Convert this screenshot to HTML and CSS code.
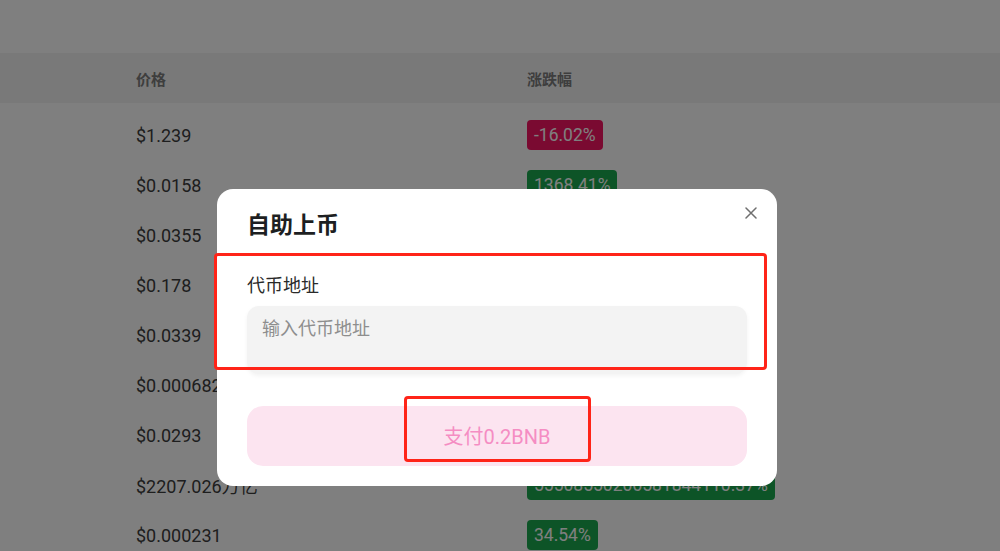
FILE: index.html
```html
<!DOCTYPE html>
<html lang="zh-CN">
<head>
<meta charset="utf-8">
<title>自助上币</title>
<link rel="stylesheet" href="styles.css">
</head>
<body>
<div class="page">
  <div class="top"></div>
  <div class="table">
    <div class="row head">
      <div class="cell price">价格</div>
      <div class="cell change">涨跌幅</div>
    </div>
    <div class="body">
      <div class="row"><div class="cell price">$1.239</div><div class="cell change"><span class="badge down">-16.02%</span></div></div>
      <div class="row"><div class="cell price">$0.0158</div><div class="cell change"><span class="badge up">1368.41%</span></div></div>
      <div class="row"><div class="cell price">$0.0355</div><div class="cell change"><span class="badge up">12.85%</span></div></div>
      <div class="row"><div class="cell price">$0.178</div><div class="cell change"><span class="badge up">8.31%</span></div></div>
      <div class="row"><div class="cell price">$0.0339</div><div class="cell change"><span class="badge up">25.07%</span></div></div>
      <div class="row"><div class="cell price">$0.000682</div><div class="cell change"><span class="badge up">41.66%</span></div></div>
      <div class="row"><div class="cell price">$0.0293</div><div class="cell change"><span class="badge up">19.72%</span></div></div>
      <div class="row"><div class="cell price">$2207.026万亿</div><div class="cell change"><span class="badge up">55508550206581844110.37%</span></div></div>
      <div class="row"><div class="cell price">$0.000231</div><div class="cell change"><span class="badge up">34.54%</span></div></div>
    </div>
  </div>
</div>

<div class="overlay">
  <div class="dialog">
    <button class="close" aria-label="关闭">
      <svg width="12" height="12" viewBox="0 0 12 12"><path d="M1 1L11 11M11 1L1 11" stroke="#6f6f6f" stroke-width="1.5" fill="none" stroke-linecap="round"/></svg>
    </button>
    <h2 class="title">自助上币</h2>
    <label class="label">代币地址</label>
    <div class="input">输入代币地址</div>
    <button class="pay">支付0.2BNB</button>
  </div>
  <div class="mark mark-field"></div>
  <div class="mark mark-pay"></div>
</div>
</body>
</html>
```

FILE: styles.css
```css
html, body {
  margin: 0;
  padding: 0;
  background: #ffffff;
  font-family: Roboto, "Noto Sans CJK SC", sans-serif;
  overflow: hidden;
}
.page {
  width: 1000px;
  height: 551px;
  overflow: hidden;
}
.top {
  height: 53px;
}
.row {
  display: grid;
  grid-template-columns: 391px 1fr;
  padding-left: 136px;
  height: 50px;
  align-items: center;
}
.row.head {
  background: #f3f3f3;
  font-size: 15px;
  font-weight: 700;
  color: #7c7c7c;
}
.body {
  padding-top: 7px;
}
.body .row {
  font-size: 18px;
  color: #3c3c3c;
}
.badge {
  display: inline-block;
  height: 30px;
  line-height: 30px;
  padding: 0 7px;
  border-radius: 4px;
  color: #ffffff;
  font-size: 17.5px;
}
.badge.down { background: #f51462; }
.badge.up { background: #1aa84e; }

.overlay {
  position: fixed;
  inset: 0;
  background: rgba(0, 0, 0, 0.5);
  padding: 189px 0 0 217px;
}
.dialog {
  position: relative;
  box-sizing: border-box;
  width: 560px;
  height: 297px;
  background: #ffffff;
  border-radius: 16px;
  padding: 22px 30px 20px;
  display: flex;
  flex-direction: column;
}
.close {
  position: absolute;
  right: 18px;
  top: 16px;
  width: 16px;
  height: 16px;
  padding: 2px;
  border: 0;
  background: none;
  display: flex;
}
.title {
  margin: 0;
  font-size: 23px;
  line-height: 30px;
  font-weight: 700;
  color: #1d1f22;
}
.label {
  margin-top: 32px;
  font-size: 18px;
  line-height: 26px;
  color: #2a2a2a;
}
.input {
  margin-top: 7px;
  height: 68px;
  box-sizing: border-box;
  padding: 10px 15px;
  background: #f3f3f3;
  border-radius: 12px;
  box-shadow: 0 2px 4px rgba(0, 0, 0, 0.05);
  font-size: 18px;
  line-height: 26px;
  color: #8e8e8e;
}
.pay {
  margin-top: 32px;
  height: 60px;
  border: 0;
  border-radius: 16px;
  background: #fce4f0;
  color: #f58dc3;
  font-family: Roboto, "Noto Sans CJK SC", sans-serif;
  font-size: 20px;
  padding-bottom: 2px;
}
.mark {
  position: absolute;
  box-sizing: border-box;
  border: 3px solid #ff2418;
  border-radius: 4px;
}
.mark-field {
  left: 214px;
  top: 253px;
  width: 553px;
  height: 117px;
}
.mark-pay {
  left: 404px;
  top: 396px;
  width: 187px;
  height: 66px;
}
```
